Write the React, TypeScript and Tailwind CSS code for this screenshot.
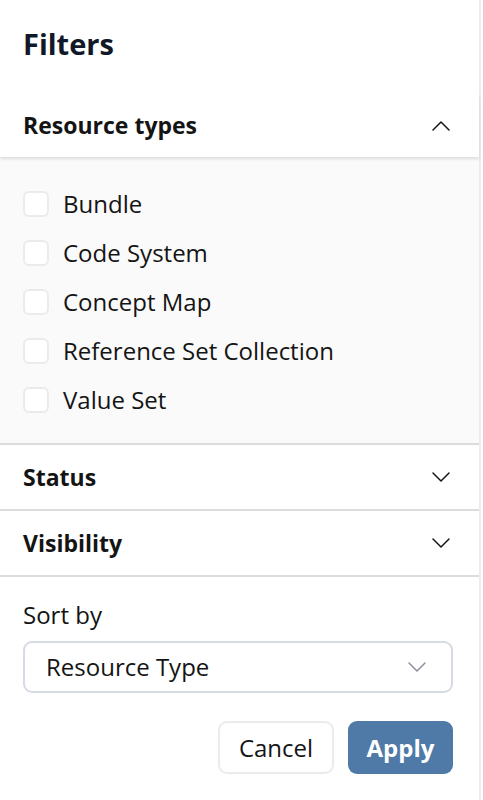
import { useState } from "react";

const RESOURCE_TYPES: string[] = ["Bundle", "Code System", "Concept Map", "Reference Set Collection", "Value Set"];

function Chevron({ up = false, className = "" }: { up?: boolean; className?: string }) {
    return (
        <svg width="18" height="10" viewBox="0 0 18 10" fill="none" className={className}>
            <polyline
                points={up ? "1,9 9,1 17,9" : "1,1 9,9 17,1"}
                stroke="currentColor"
                strokeWidth="1.5"
                strokeLinecap="round"
                strokeLinejoin="round"
            />
        </svg>
    );
}

export default function App() {
    const [checked, setChecked] = useState<string[]>([]);

    const toggle = (name: string) => {
        setChecked((prev) => (prev.includes(name) ? prev.filter((n) => n !== name) : [...prev, name]));
    };

    return (
        <div className="w-[481px] min-h-[800px] bg-white border-r-2 border-[#ececec] font-['Open_Sans',sans-serif] text-[#141414]">
            <h1 className="pl-[23px] pr-[26px] pt-[20px] pb-[26px] text-[29px] leading-[48px] font-bold text-[#111827]">
                Filters
            </h1>

            {/* resource types, open */}
            <section>
                <button className="relative z-10 w-full h-[63px] flex items-center justify-between pl-[23px] pr-[26px] bg-white shadow-[0_2px_3px_rgba(0,0,0,0.12)]">
                    <span className="text-[23px] font-bold">Resource types</span>
                    <Chevron up className="mr-[3px]" />
                </button>
                <ul className="bg-[#fafafa] pt-[22px] pb-[19px] px-[23px]">
                    {RESOURCE_TYPES.map((name) => (
                        <li key={name} className="h-[49px] flex items-center">
                            <button
                                onClick={() => toggle(name)}
                                className="w-[26px] h-[26px] rounded-[6px] border-2 border-[#ebebeb] bg-white shrink-0"
                            />
                            <span className="ml-[14px] text-[24px]">{name}</span>
                        </li>
                    ))}
                </ul>
            </section>

            <section className="border-t-2 border-[#dcdcdc]">
                <button className="w-full h-[64px] flex items-center justify-between pl-[23px] pr-[26px]">
                    <span className="text-[23px] font-bold">Status</span>
                    <Chevron className="mr-[3px]" />
                </button>
            </section>
            <section className="border-t-2 border-[#dcdcdc]">
                <button className="w-full h-[64px] flex items-center justify-between pl-[23px] pr-[26px]">
                    <span className="text-[23px] font-bold">Visibility</span>
                    <Chevron className="mr-[3px]" />
                </button>
            </section>

            <div className="border-t-2 border-[#dcdcdc] pl-[23px] pr-[26px] pt-[20px]">
                <label className="block text-[24px] leading-[36px]">Sort by</label>
                <div className="mt-[8px] h-[52px] flex items-center justify-between rounded-[9px] border-2 border-[#d6dbe3] pl-[21px] pr-[25px]">
                    <span className="text-[24px]">Resource Type</span>
                    <Chevron className="text-[#8a8f98]" />
                </div>
                <div className="mt-[28px] flex justify-end gap-[14px]">
                    <button className="w-[116px] h-[53px] rounded-[9px] border-2 border-[#ebebeb] bg-white text-[24px]">
                        Cancel
                    </button>
                    <button className="w-[105px] h-[53px] rounded-[9px] bg-[#4f79a7] text-white text-[24px] font-bold">
                        Apply
                    </button>
                </div>
            </div>
        </div>
    );
}
